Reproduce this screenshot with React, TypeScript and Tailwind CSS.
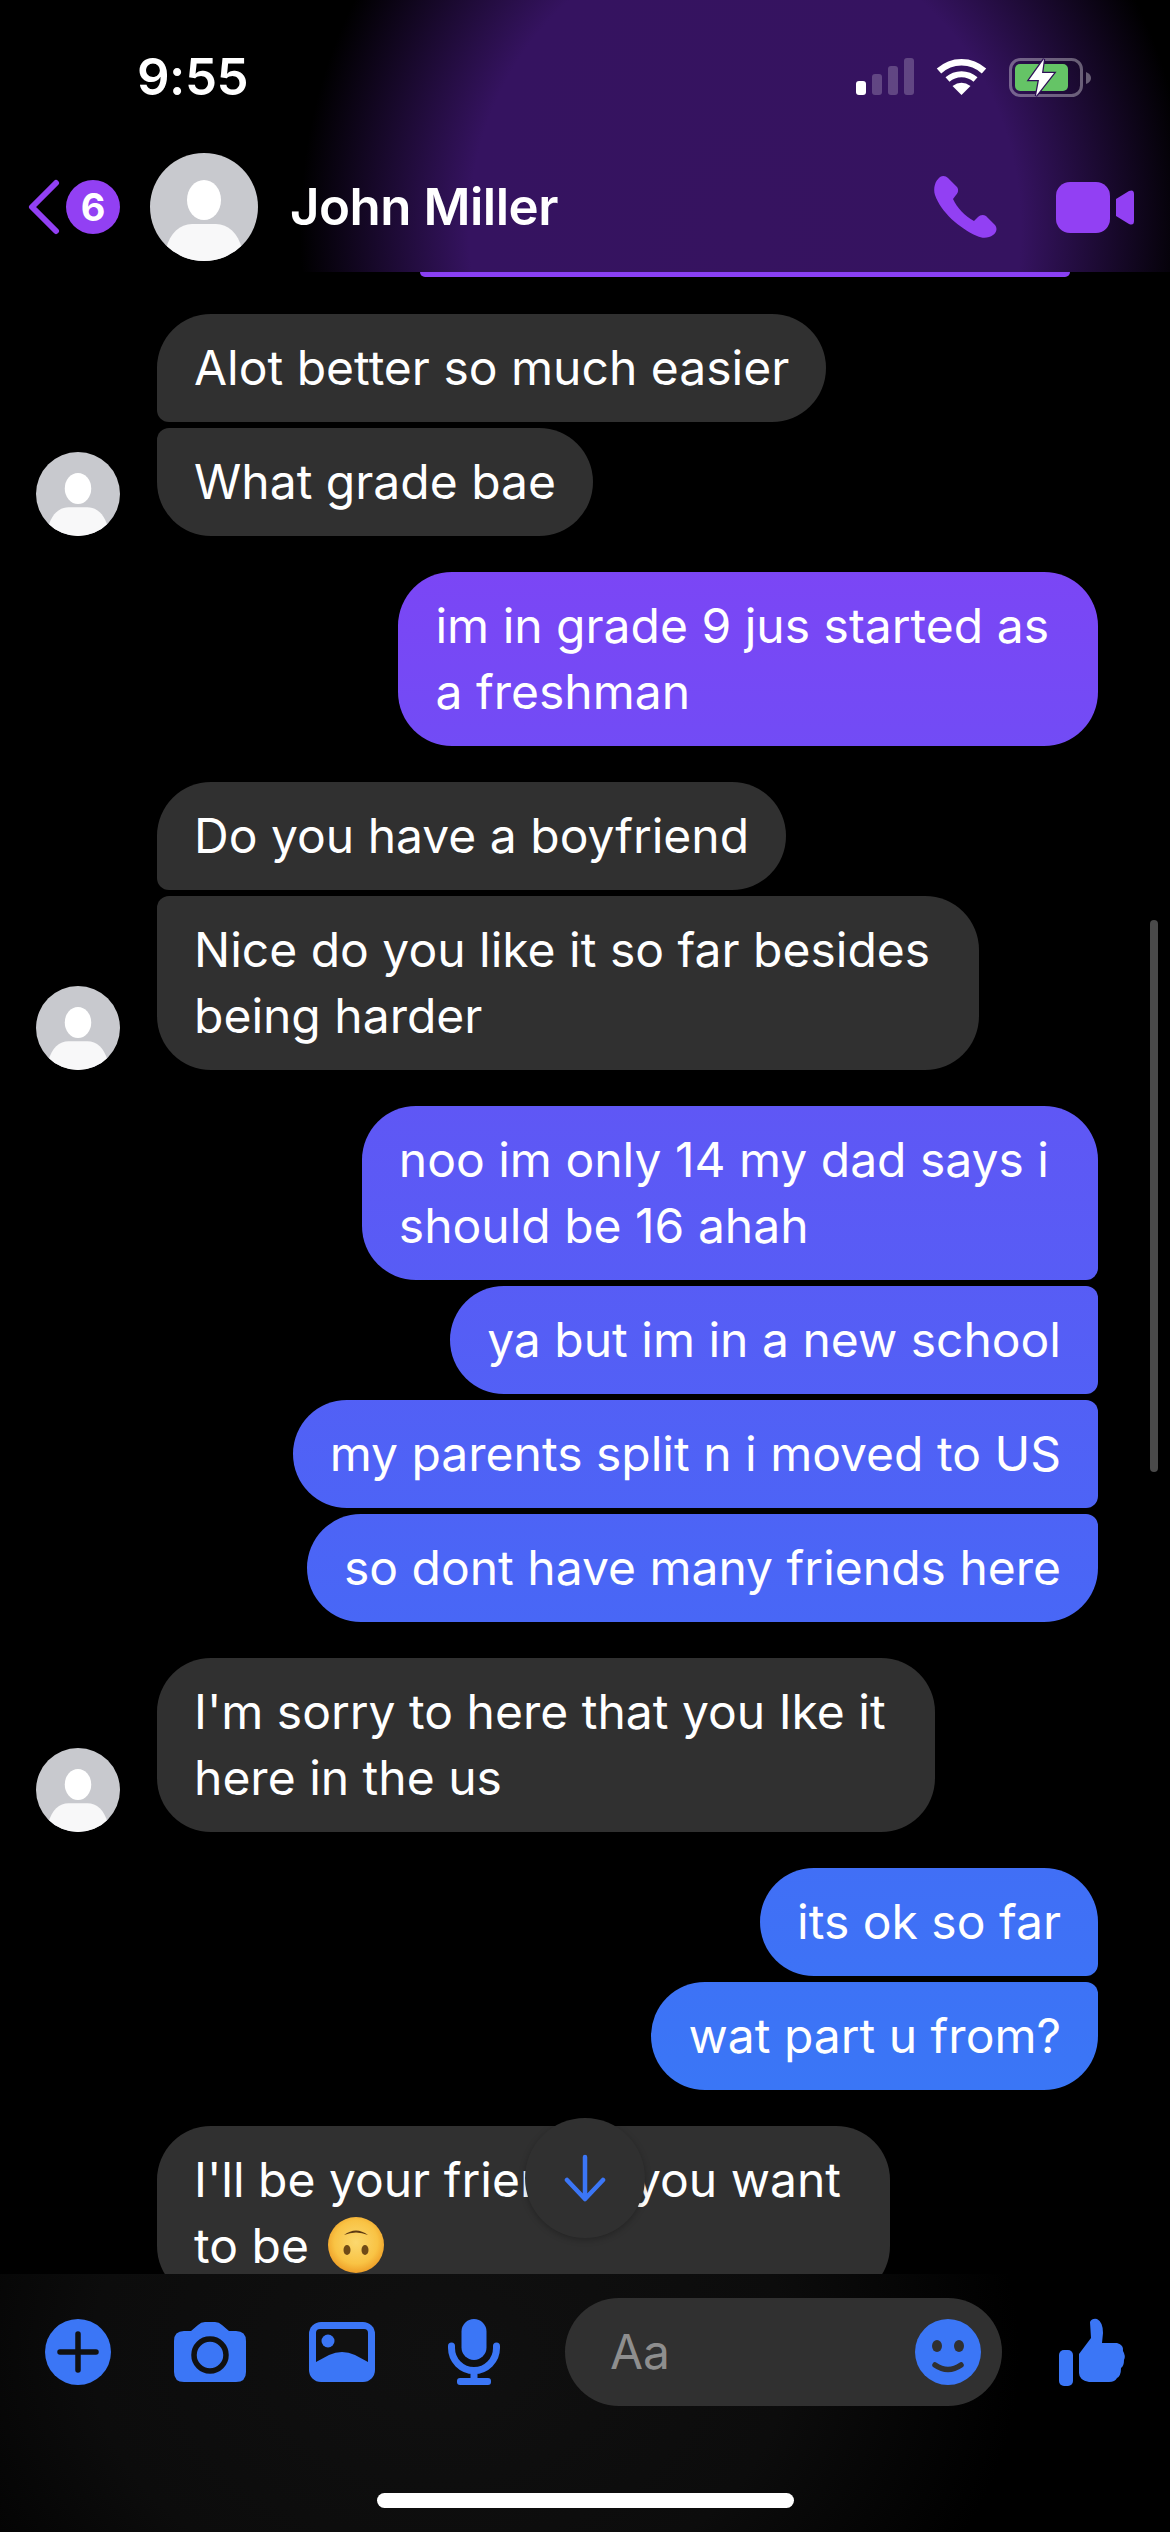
import type { ReactNode } from 'react'

const OWN_GRADIENT =
  'bg-[linear-gradient(180deg,#8a3ff4_272px,#7b46f5_571px,#5f57f5_1106px,#4867f6_1622px,#3a76f6_2089px)] bg-fixed'

function PersonAvatar({ size }: { size: 'lg' | 'sm' }) {
  const cls = size === 'lg' ? 'h-[108px] w-[108px]' : 'h-[84px] w-[84px]'
  const id = `person-${size}`
  return (
    <svg viewBox="0 0 108 108" className={`${cls} shrink-0`}>
      <defs>
        <clipPath id={id}>
          <circle cx="54" cy="54" r="54" />
        </clipPath>
      </defs>
      <circle cx="54" cy="54" r="54" fill="#c8c9ce" />
      <ellipse cx="54" cy="47" rx="17" ry="20" fill="#fff" />
      <path d="M16 96 C20 80 30 71 42 71 H66 C78 71 88 80 92 96 V108 H16Z" fill="#f8f8f9" clipPath={`url(#${id})`} />
    </svg>
  )
}

// wrapped bubbles keep some slack on the right, like a real text wrap does
function Incoming({ children, pos, wrapped }: { children: ReactNode; pos?: 'first' | 'last'; wrapped?: boolean }) {
  const corners = pos === 'first' ? 'rounded-bl-[12px]' : pos === 'last' ? 'rounded-tl-[12px]' : ''
  return (
    <div
      className={`w-fit whitespace-nowrap rounded-[54px] ${corners} bg-[#303030] py-[21px] pl-[37px] ${wrapped ? 'pr-[49px]' : 'pr-[37px]'} text-white`}
    >
      {children}
    </div>
  )
}

function Outgoing({ children, pos, wrapped }: { children: ReactNode; pos?: 'first' | 'mid' | 'last'; wrapped?: boolean }) {
  const corners =
    pos === 'first'
      ? 'rounded-br-[12px]'
      : pos === 'mid'
        ? 'rounded-r-[12px]'
        : pos === 'last'
          ? 'rounded-tr-[12px]'
          : ''
  return (
    <div
      className={`ml-auto w-fit whitespace-nowrap rounded-[54px] ${corners} ${OWN_GRADIENT} py-[21px] pl-[37px] ${wrapped ? 'pr-[49px]' : 'pr-[37px]'} text-white`}
    >
      {children}
    </div>
  )
}

function StatusIcons() {
  return (
    <div className="flex items-start gap-[22px]">
      <svg viewBox="0 0 58 37" className="h-[37px] w-[58px]">
        <rect x="0" y="23" width="10" height="14" rx="3" fill="#fff" />
        <rect x="16" y="16" width="10" height="21" rx="3" fill="#fff" fillOpacity=".22" />
        <rect x="32" y="8" width="10" height="29" rx="3" fill="#fff" fillOpacity=".22" />
        <rect x="48" y="0" width="10" height="37" rx="3" fill="#fff" fillOpacity=".22" />
      </svg>
      <svg viewBox="0 0 51 37" className="h-[37px] w-[51px]">
        <path d="M3 13 A33 33 0 0 1 48 13" fill="none" stroke="#fff" strokeWidth="6.5" />
        <path d="M11.5 21.5 A21 21 0 0 1 39.5 21.5" fill="none" stroke="#fff" strokeWidth="6" />
        <path d="M25.5 37 L16.5 28 Q25.5 21.5 34.5 28Z" fill="#fff" />
      </svg>
      <svg viewBox="0 0 82 39" className="h-[39px] w-[82px]">
        <rect x="1.5" y="1.5" width="71" height="36" rx="10" fill="none" stroke="#fff" strokeOpacity=".35" strokeWidth="3" />
        <rect x="6" y="6" width="53" height="27" rx="5" fill="#65c466" />
        <path d="M77 14 Q82 16 82 20 Q82 24 77 26Z" fill="#fff" fillOpacity=".35" />
        <path d="M35 1 L20 22 H30 L27 38 L45 15 H33Z" fill="#fff" stroke="#2f1058" strokeWidth="2.5" paintOrder="stroke" />
      </svg>
    </div>
  )
}

function Header() {
  return (
    <header className="h-[272px] shrink-0 bg-[radial-gradient(ellipse_445px_480px_at_745px_230px,#361360_0%,#351360_62%,#000_100%)]">
      <div className="flex h-[150px] items-start justify-between pl-[137px] pr-[79px] pt-[58px]">
        <span className="text-[51px] font-semibold leading-[38px] tracking-[-0.5px] text-white">9:55</span>
        <StatusIcons />
      </div>
      <div className="flex items-center pl-[28px] pr-[36px] pt-[3px]">
        <svg viewBox="0 0 32 56" className="h-[56px] w-[32px]">
          <path d="M28 4 L4 28 L28 52" fill="none" stroke="#9240f3" strokeWidth="6" strokeLinecap="round" strokeLinejoin="round" />
        </svg>
        <div className="ml-[6px] flex h-[54px] w-[54px] items-center justify-center rounded-full bg-[#9240f3] text-[38px] font-bold text-white">
          6
        </div>
        <div className="ml-[30px]">
          <PersonAvatar size="lg" />
        </div>
        <span className="ml-[32px] text-[51px] font-semibold tracking-[-0.5px] text-white">John Miller</span>
        <svg viewBox="0 0 65 64" className="ml-auto h-[64px] w-[65px]">
          <path
            d="M7 2 C10 0 13 1 15 3 L24 12 C26 15 25 18 23 20 L20 24 C24 33 32 41 41 46 L45 42 C47 40 50 39 53 41 L62 50 C65 54 63 58 60 60 C56 63 50 64 44 61 C26 53 8 37 2 20 C0 13 2 6 7 2Z"
            fill="#9240f3"
          />
        </svg>
        <svg viewBox="0 0 78 51" className="ml-[58px] h-[51px] w-[78px]">
          <rect width="54" height="51" rx="14" fill="#9240f3" />
          <path d="M60 17 L73 9 Q78 7 78 12 V39 Q78 44 73 42 L60 34Z" fill="#9240f3" />
        </svg>
      </div>
    </header>
  )
}

function UpsideDownFace() {
  return (
    <svg viewBox="0 0 56 56" className="ml-[6px] inline-block h-[56px] w-[56px] align-[-10px]">
      <defs>
        <radialGradient id="face" cx="50%" cy="45%" r="55%">
          <stop offset="0%" stopColor="#fbd86f" />
          <stop offset="70%" stopColor="#f9c344" />
          <stop offset="100%" stopColor="#ee9f28" />
        </radialGradient>
      </defs>
      <circle cx="28" cy="28" r="28" fill="url(#face)" />
      <path d="M16 18 Q28 9 40 18 Q28 13 16 18Z" fill="#5d3a13" />
      <ellipse cx="19" cy="33" rx="3.5" ry="5" fill="#6f4a16" />
      <ellipse cx="37" cy="33" rx="3.5" ry="5" fill="#6f4a16" />
    </svg>
  )
}

function Messages() {
  return (
    <main className="relative flex-1 overflow-hidden text-[48px] leading-[66px]">
      <div className={`ml-[420px] h-[5px] w-[650px] rounded-b-[16px] ${OWN_GRADIENT}`} />
      <div className="mt-[37px] flex flex-col gap-[36px] pl-[36px] pr-[72px]">
        <div className="flex items-end gap-[37px]">
          <PersonAvatar size="sm" />
          <div className="flex flex-col gap-[6px]">
            <Incoming pos="first">Alot better so much easier</Incoming>
            <Incoming pos="last">What grade bae</Incoming>
          </div>
        </div>

        <Outgoing wrapped>
          im in grade 9 jus started as
          <br />a freshman
        </Outgoing>

        <div className="flex items-end gap-[37px]">
          <PersonAvatar size="sm" />
          <div className="flex flex-col gap-[6px]">
            <Incoming pos="first">Do you have a boyfriend</Incoming>
            <Incoming pos="last" wrapped>
              Nice do you like it so far besides
              <br />
              being harder
            </Incoming>
          </div>
        </div>

        <div className="flex flex-col gap-[6px]">
          <Outgoing pos="first" wrapped>
            noo im only 14 my dad says i
            <br />
            should be 16 ahah
          </Outgoing>
          <Outgoing pos="mid">ya but im in a new school</Outgoing>
          <Outgoing pos="mid">my parents split n i moved to US</Outgoing>
          <Outgoing pos="last">so dont have many friends here</Outgoing>
        </div>

        <div className="flex items-end gap-[37px]">
          <PersonAvatar size="sm" />
          <Incoming wrapped>
            I'm sorry to here that you Ike it
            <br />
            here in the us
          </Incoming>
        </div>

        <div className="flex flex-col gap-[6px]">
          <Outgoing pos="first">its ok so far</Outgoing>
          <Outgoing pos="last">wat part u from?</Outgoing>
        </div>

        <div className="pl-[121px]">
          <Incoming wrapped>
            I'll be your friend if you want
            <br />
            to be <UpsideDownFace />
          </Incoming>
        </div>
      </div>

      {/* scroll to bottom button floats over the last message */}
      <button className="absolute left-[525px] top-[1846px] flex h-[120px] w-[120px] items-center justify-center rounded-full bg-[#303030] shadow-[0_2px_6px_rgba(0,0,0,0.25)]">
        <svg viewBox="0 0 44 48" className="h-[48px] w-[44px]">
          <path d="M22 3 V45 M4 26 L22 45 L40 26" fill="none" stroke="#3b76f6" strokeWidth="4.5" strokeLinecap="round" strokeLinejoin="round" />
        </svg>
      </button>

      {/* scrollbar */}
      <div className="absolute left-[1150px] top-[648px] h-[552px] w-[8px] rounded-full bg-[#4a4a4a]" />
    </main>
  )
}

function Composer() {
  return (
    <footer className="shrink-0 bg-[radial-gradient(ellipse_580px_420px_at_440px_80px,#101010_0%,#0c0c0c_60%,#000_100%)] pt-[24px]">
      <div className="flex h-[108px] items-center pl-[45px]">
        <svg viewBox="0 0 66 66" className="h-[66px] w-[66px]">
          <circle cx="33" cy="33" r="33" fill="#3b76f6" />
          <path d="M33 15 V51 M15 33 H51" stroke="#111" strokeWidth="5.5" strokeLinecap="round" />
        </svg>
        <svg viewBox="0 0 72 60" className="ml-[63px] h-[60px] w-[72px]">
          <path
            d="M24 3 Q27 0 31 0 H41 Q45 0 48 3 L55 9 H62 Q72 9 72 19 V50 Q72 60 62 60 H10 Q0 60 0 50 V19 Q0 9 10 9 H17Z"
            fill="#3b76f6"
          />
          <circle cx="36" cy="33" r="16" fill="none" stroke="#111" strokeWidth="5.5" />
        </svg>
        <svg viewBox="0 0 66 60" className="ml-[63px] h-[60px] w-[66px]">
          <rect width="66" height="60" rx="12" fill="#3b76f6" />
          <path d="M7 40 V11 Q7 7 11 7 H55 Q59 7 59 11 V40 L46 33 Q33 27 20 33Z" fill="#111" />
          <circle cx="19" cy="19" r="6.5" fill="#3b76f6" />
        </svg>
        <svg viewBox="0 0 52 66" className="ml-[73px] h-[66px] w-[52px]">
          <rect x="13.5" y="0" width="25" height="41" rx="12.5" fill="#3b76f6" />
          <path d="M3.5 27 V29 A22.5 22.5 0 0 0 48.5 29 V27" fill="none" stroke="#3b76f6" strokeWidth="7" strokeLinecap="round" />
          <rect x="22.5" y="50" width="7" height="12" fill="#3b76f6" />
          <rect x="9" y="59" width="34" height="7" rx="3" fill="#3b76f6" />
        </svg>
        <div className="ml-[65px] flex h-[108px] w-[437px] items-center justify-between rounded-full bg-[#303030] pl-[45px] pr-[21px]">
          <span className="text-[48px] text-[#8e8e8e]">Aa</span>
          <svg viewBox="0 0 66 66" className="h-[66px] w-[66px]">
            <circle cx="33" cy="33" r="33" fill="#3b76f6" />
            <ellipse cx="22" cy="27" rx="5" ry="6" fill="#303030" />
            <ellipse cx="44" cy="27" rx="5" ry="6" fill="#303030" />
            <path d="M20 46 Q33 55 46 46" fill="none" stroke="#303030" strokeWidth="5.5" strokeLinecap="round" />
          </svg>
        </div>
        <svg viewBox="0 0 67 69" className="ml-[57px] h-[69px] w-[67px]">
          <rect x="0" y="32" width="14" height="36" rx="5" fill="#3b76f6" />
          <path
            d="M20 36 L32 20 L31 4 Q33 0 38 1 Q44 4 44 15 L43 25 H58 Q65 27 64 33 Q67 38 65 42 Q65 48 62 50 Q62 58 58 60 Q56 64 50 64 H30 Q20 62 20 55Z"
            fill="#3b76f6"
          />
        </svg>
      </div>
      <div className="mx-auto mb-[24px] mt-[87px] h-[15px] w-[417px] rounded-full bg-white" />
    </footer>
  )
}

export default function App() {
  return (
    <div className="flex h-[2532px] w-[1170px] flex-col overflow-hidden bg-black [font-family:Inter,sans-serif]">
      <Header />
      <Messages />
      <Composer />
    </div>
  )
}
